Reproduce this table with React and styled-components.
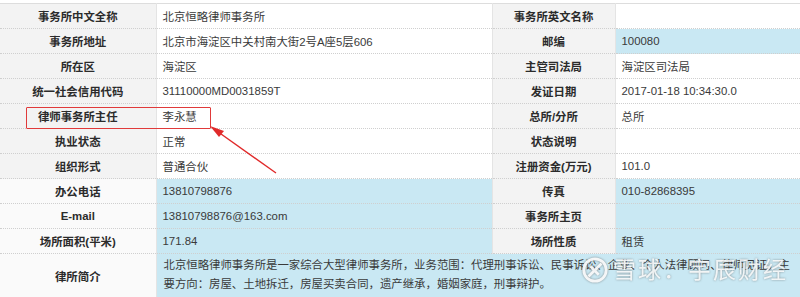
import React from 'react';
import styled, { createGlobalStyle } from 'styled-components';

const GlobalStyle = createGlobalStyle`
  html, body {
    margin: 0;
    padding: 0;
    background: #ffffff;
  }
  body {
    font-family: "Liberation Sans", "Noto Sans CJK SC", sans-serif;
    overflow: hidden;
  }
`;

const rows = [
  [['事务所中文全称', '北京恒略律师事务所'], ['事务所英文名称', '']],
  [['事务所地址', '北京市海淀区中关村南大街2号A座5层606'], ['邮编', '100080', true]],
  [['所在区', '海淀区'], ['主管司法局', '海淀区司法局']],
  [['统一社会信用代码', '31110000MD0031859T'], ['发证日期', '2017-01-18 10:34:30.0']],
  [['律师事务所主任', '李永慧'], ['总所/分所', '总所']],
  [['执业状态', '正常'], ['状态说明', '']],
  [['组织形式', '普通合伙'], ['注册资金(万元)', '101.0']],
  [['办公电话', '13810798876', true], ['传真', '010-82868395', true]],
  [['E-mail', '13810798876@163.com', true], ['事务所主页', '', true]],
  [['场所面积(平米)', '171.84', true], ['场所性质', '租赁', true]],
];

const intro =
  '北京恒略律师事务所是一家综合大型律师事务所，业务范围：代理刑事诉讼、民事诉讼、企业、个人法律顾问、律师见证。主要方向：房屋、土地拆迁，房屋买卖合同，遗产继承，婚姻家庭，刑事辩护。';

function App() {
  return (
    <>
      <GlobalStyle />
      <Page>
        <Table>
          <colgroup>
            <col style={{ width: 156 }} />
            <col style={{ width: 336 }} />
            <col style={{ width: 123 }} />
            <col style={{ width: 185 }} />
          </colgroup>
          <tbody>
            {rows.map((row, i) => (
              <tr key={i}>
                {row.map(([label, value, blue], j) => (
                  <React.Fragment key={j}>
                    <Label $plain={blue && j === 0}>{label}</Label>
                    <Value $blue={blue}>{value}</Value>
                  </React.Fragment>
                ))}
              </tr>
            ))}
            <tr>
              <Label $plain $tall>律所简介</Label>
              <Value $blue $multi colSpan={3}>{intro}</Value>
            </tr>
          </tbody>
        </Table>

        <Highlight />
        <Arrow width="80" height="60" viewBox="0 0 80 60">
          <line x1="6" y1="4" x2="68" y2="48" stroke="#e02a2a" strokeWidth="1.4" />
          <polygon points="2,1 16,6 11,12" fill="#e02a2a" />
        </Arrow>

        <Watermark>
          <svg width="28" height="28" viewBox="0 0 30 30">
            <circle cx="15" cy="15" r="12" fill="none" stroke="rgba(255,255,255,0.9)" strokeWidth="3" />
            <path d="M8 22 L22 8 M10 11 L19 20" stroke="rgba(255,255,255,0.9)" strokeWidth="3" fill="none" />
          </svg>
          <WatermarkText>雪球：宇辰财经</WatermarkText>
        </Watermark>
      </Page>
    </>
  );
}

const Page = styled.div`
  position: relative;
  width: 800px;
  height: 297px;
  padding-top: 3px;
  box-sizing: border-box;
  overflow: hidden;
`;

const Table = styled.table`
  width: 800px;
  border-collapse: collapse;
  table-layout: fixed;
  font-size: 11.4px;
  color: #333333;
  border-top: 1px solid #dddddd;
`;

const Label = styled.td`
  height: ${p => (p.$tall ? 43 : 24)}px;
  padding: 0 4px;
  text-align: center;
  font-weight: bold;
  background: ${p => (p.$plain ? '#fafafa' : '#f3f3f3')};
  border-bottom: 1px dotted #cfcfcf;
  border-right: 1px solid #e4e4e4;
  white-space: nowrap;
  color: #2b2b2b;
`;

const Value = styled.td`
  padding: ${p => (p.$multi ? '2px 6px 0 7px' : '0 6px')};
  background: ${p => (p.$blue ? '#c9e8f3' : '#ffffff')};
  border-bottom: 1px dotted #cfcfcf;
  border-right: 1px solid #e4e4e4;
  line-height: ${p => (p.$multi ? '19px' : 'normal')};
  vertical-align: ${p => (p.$multi ? 'top' : 'middle')};
  white-space: ${p => (p.$multi ? 'normal' : 'nowrap')};
  color: #3a3a3a;
`;

const Highlight = styled.div`
  position: absolute;
  left: 26px;
  top: 107px;
  width: 183px;
  height: 20px;
  border: 1.5px solid #e03a3a;
  border-radius: 1px;
  pointer-events: none;
`;

const Arrow = styled.svg`
  position: absolute;
  left: 208px;
  top: 125px;
`;

const Watermark = styled.div`
  position: absolute;
  left: 581px;
  top: 254px;
  width: 215px;
  height: 32px;
  display: flex;
  align-items: center;
  gap: 4px;
  white-space: nowrap;
  filter: drop-shadow(0 0 1px rgba(90, 90, 90, 0.7));
`;

const WatermarkText = styled.span`
  font-size: 23px;
  line-height: 28px;
  color: rgba(255, 255, 255, 0.85);
  letter-spacing: 2px;
`;

export default App;
